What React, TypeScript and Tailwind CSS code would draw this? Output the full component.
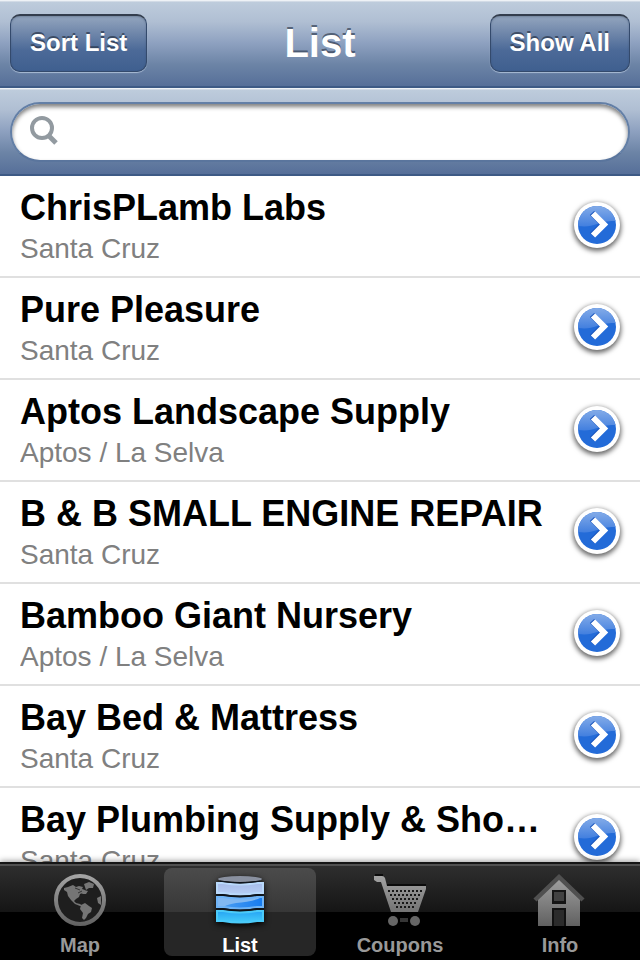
import React from "react";

type Tab = "map" | "list" | "coupons" | "info";

const places = [
  { name: "ChrisPLamb Labs", area: "Santa Cruz" },
  { name: "Pure Pleasure", area: "Santa Cruz" },
  { name: "Aptos Landscape Supply", area: "Aptos / La Selva" },
  { name: "B & B SMALL ENGINE REPAIR", area: "Santa Cruz" },
  { name: "Bamboo Giant Nursery", area: "Aptos / La Selva" },
  { name: "Bay Bed & Mattress", area: "Santa Cruz" },
  { name: "Bay Plumbing Supply & Showroom", area: "Santa Cruz" },
];

const barFill =
  "border-b-2 border-[#3d5a85] bg-[linear-gradient(180deg,#bfcddd_0%,#b0bfd3_25%,#8ea1c0_50%,#6c84a6_75%,#566f99_100%)] shadow-[inset_0_1px_0_#eef2f6,inset_0_2px_0_#d2dbe6]";

function BarButton({ children }: { children: React.ReactNode }) {
  return (
    <button
      type="button"
      className="h-[58px] rounded-[10px] border border-t-2 border-[#344a6c] border-t-[#333d4d] bg-[linear-gradient(180deg,#93a5be_0%,#7188ab_30%,#4c6a98_62%,#3f5f8f_100%)] px-[19px] pb-[2px] text-2xl leading-7 font-bold text-white shadow-[inset_0_1px_2px_rgba(40,55,80,0.3),0_1px_1px_rgba(200,215,235,0.7)] [text-shadow:0_-2px_0_rgba(40,52,72,0.7)]"
    >
      {children}
    </button>
  );
}

function DisclosureButton({ label }: { label: string }) {
  return (
    <button
      type="button"
      aria-label={label}
      className="mt-[14px] flex size-[46px] shrink-0 items-center justify-center rounded-full bg-white shadow-[0_2px_5px_1px_rgba(0,0,0,0.6)]"
    >
      <svg viewBox="0 0 38 38" className="size-[38px]" aria-hidden="true">
        <defs>
          <linearGradient id="gloss" x1="0" y1="0" x2="0" y2="1">
            <stop offset="0" stopColor="#83abe8" />
            <stop offset="1" stopColor="#427fdf" />
          </linearGradient>
          <clipPath id="disc">
            <circle cx="19" cy="19" r="19" />
          </clipPath>
        </defs>
        <g clipPath="url(#disc)">
          <rect width="38" height="38" fill="#236bd8" />
          <path d="M0 20C9 21 13 20 19 18C26 15.500 32 15 38 15V0H0Z" fill="url(#gloss)" />
        </g>
        <path d="M14 7L25 18L14 29" fill="none" stroke="#1b56bd" strokeWidth="6" />
        <path d="M15 7.500L26 18.500L15 29.500" fill="none" stroke="#fff" strokeWidth="6" />
      </svg>
    </button>
  );
}

function GrayGradient({ id }: { id: string }) {
  return (
    <linearGradient id={id} gradientUnits="userSpaceOnUse" x1="0" y1="0" x2="0" y2="58">
      <stop offset="0" stopColor="#ababab" />
      <stop offset="1" stopColor="#5e5e5e" />
    </linearGradient>
  );
}

function GlobeIcon() {
  return (
    <svg viewBox="0 0 60 60" className="size-[60px]" aria-hidden="true">
      <defs><GrayGradient id="globeGray" /></defs>
      <circle cx="30" cy="30" r="24" fill="#1e1e1e" stroke="url(#globeGray)" strokeWidth="4" />
      <g fill="#757575">
        <path d="M14 18L18 17L23 15L26 17L29 16L33 17L32 19L35 20L33 23L30 24L29 27L26 29L24 31L26 33L30 34L33 36L30 36L25 34L21 30L18 26L17 22L14 20Z" />
        <path d="M34 14L39 12L44 14L43 18L39 18L36 20L35 17Z" />
        <path d="M31 35L35 33L39 36L42 38L41 42L38 44L36 48L34 50L32 48L33 43L30 39Z" />
        <path d="M47 28L51 26V35L48 33Z" />
        <path d="M34 20L38 21L36 24L32 24Z" />
      </g>
      <path d="M25 18L30 20M28 23L32 21" stroke="#333" strokeWidth="1" />
    </svg>
  );
}

function DatabaseIcon() {
  return (
    <svg viewBox="0 0 60 60" className="size-[60px] drop-shadow-[0_2px_3px_#000000]" aria-hidden="true">
      <defs>
        <linearGradient id="layerTop" x1="0" y1="0" x2="0" y2="1">
          <stop offset="0" stopColor="#a7bce9" />
          <stop offset="1" stopColor="#b6cef5" />
        </linearGradient>
        <linearGradient id="layerLow" x1="0" y1="0" x2="0" y2="1">
          <stop offset="0" stopColor="#26a4f4" />
          <stop offset="1" stopColor="#46cdfa" />
        </linearGradient>
        <linearGradient id="layerGloss" x1="0" y1="0" x2="1" y2="0">
          <stop offset="0" stopColor="#4a9df2" />
          <stop offset="1" stopColor="#177cf0" />
        </linearGradient>
      </defs>
      <ellipse cx="30" cy="9" rx="22" ry="3" fill="#89909f" />
      <path d="M7 13L13 13Q30 16 47 13L53 13V23L47 23Q30 26 13 23L7 23Z" fill="url(#layerTop)" stroke="#b9d9fb" strokeWidth="2" />
      <path d="M7 27L13 27Q30 30 47 27L53 27V37L47 37Q30 40 13 37L7 37Z" fill="#81b8f2" />
      <path d="M13 37C22 31 40 34 52 27V37L47 37Q30 40 13 37Z" fill="url(#layerGloss)" />
      <path d="M7 27L13 27Q30 30 47 27L53 27V37L47 37Q30 40 13 37L7 37Z" fill="none" stroke="#6fb4f7" strokeWidth="2" />
      <path d="M7 41L13 41Q30 44 47 41L53 41V51L47 51Q30 54 13 51L7 51Z" fill="url(#layerLow)" stroke="#4bcaf9" strokeWidth="2" />
      <g fill="#101820">
        <path d="M10 10.500Q30 14 50 10.500V11.800Q30 15 10 11.800Z" />
        <path d="M6 24.300H14Q30 27 46 24.300H54V25.700H46Q30 28.300 14 25.700H6Z" />
        <path d="M6 38.300H14Q30 41 46 38.300H54V39.700H46Q30 42.300 14 39.700H6Z" />
      </g>
    </svg>
  );
}

const cartHoles = [
  { y: 20, x: 18, count: 9 },
  { y: 24, x: 20, count: 8 },
  { y: 28, x: 22, count: 7 },
  { y: 32, x: 24, count: 6 },
  { y: 36, x: 26, count: 5 },
];

function CartIcon() {
  return (
    <svg viewBox="0 0 60 60" className="size-[60px]" aria-hidden="true">
      <defs><GrayGradient id="cartGray" /></defs>
      <path d="M4 6H12Q14 6 15 8L17 16H56V19L48 42H21L11 12H7L4 10Z" fill="url(#cartGray)" />
      <path d="M5 5H13M17 15H56" stroke="#0b0b0b" strokeWidth="2" />
      <g fill="#171717">
        {cartHoles.flatMap((row) =>
          Array.from({ length: row.count }, (_, i) => (
            <rect key={`${row.y}-${i}`} x={row.x + i * 4} y={row.y} width="2" height="2" />
          )),
        )}
      </g>
      <rect x="30" y="48" width="8" height="4" fill="#353535" />
      <circle cx="23" cy="51" r="5" fill="#666" />
      <circle cx="45" cy="51" r="5" fill="#666" />
    </svg>
  );
}

function HouseIcon() {
  return (
    <svg viewBox="0 0 60 60" className="size-[60px]" aria-hidden="true">
      <defs><GrayGradient id="houseGray" /></defs>
      <path d="M8 29L29 9L50 29V56H8Z" fill="url(#houseGray)" />
      <path d="M5 30L29 7L53 30" fill="none" stroke="#505050" strokeWidth="4.500" />
      <rect x="22" y="20" width="14" height="14" fill="#151515" />
      <rect x="24" y="22" width="10" height="9" fill="#414141" />
      <path d="M22 56V38H36V56Z" fill="#111" />
      <rect x="24" y="40" width="10" height="16" fill="#2b2b2b" />
    </svg>
  );
}

const tabs: { id: Tab; label: string; icon: React.ReactNode }[] = [
  { id: "map", label: "Map", icon: <GlobeIcon /> },
  { id: "list", label: "List", icon: <DatabaseIcon /> },
  { id: "coupons", label: "Coupons", icon: <CartIcon /> },
  { id: "info", label: "Info", icon: <HouseIcon /> },
];

export default function App() {
  const [active, setActive] = React.useState<Tab>("list");

  return (
    <div className="flex h-screen flex-col overflow-hidden bg-white font-['Liberation_Sans',Arial,sans-serif]">
      <header className={`grid h-[88px] shrink-0 grid-cols-[1fr_auto_1fr] items-center px-[10px] ${barFill}`}>
        <div><BarButton>Sort List</BarButton></div>
        <h1 className="text-[40px] leading-[44px] font-bold text-white [text-shadow:0_-2px_0_rgba(50,62,82,0.7)]">List</h1>
        <div className="text-right"><BarButton>Show All</BarButton></div>
      </header>

      <form role="search" className={`h-[88px] shrink-0 px-[10px] pt-[14px] ${barFill}`} onSubmit={(e) => e.preventDefault()}>
        <label className="flex h-[60px] items-center gap-2 rounded-full border-2 border-[#637fa6] border-b-[#5a759d] bg-white px-4 shadow-[inset_0_3px_4px_rgba(0,0,0,0.5)]">
          <svg viewBox="0 0 32 32" className="size-8 shrink-0" fill="none" stroke="#929aa0" strokeWidth="4" aria-hidden="true">
            <circle cx="14" cy="12" r="10" />
            <path d="M20 19L28 27" strokeWidth="5" />
          </svg>
          <input type="search" aria-label="Search" className="h-10 min-w-0 flex-1 bg-transparent text-[28px] text-black outline-none" />
        </label>
      </form>

      <main className="min-h-0 flex-1 overflow-hidden">
        <ul>
          {places.map((place) => (
            <li key={place.name} className="flex h-[102px] items-start gap-3 border-b-2 border-[#e0e0e0] px-5 pt-3">
              <div className="min-w-0 flex-1">
                <h2 className="truncate text-[36px] leading-10 font-bold text-black">{place.name}</h2>
                <p className="mt-[5px] truncate text-[28px] leading-8 text-[#808080]">{place.area}</p>
              </div>
              <DisclosureButton label={`Details for ${place.name}`} />
            </li>
          ))}
        </ul>
      </main>

      <nav className="z-10 flex h-[98px] shrink-0 border-t-2 border-[#151515] bg-[linear-gradient(180deg,#505050_0px,#505050_2px,#2e2e2e_2px,#151515_48px,#000000_48px)] pt-1 pb-1 shadow-[0_-1px_6px_rgba(0,0,0,0.4)]">
        {tabs.map((tab) => (
          <button
            key={tab.id}
            type="button"
            aria-current={active === tab.id ? "page" : undefined}
            onClick={() => setActive(tab.id)}
            className={`mx-1 flex flex-1 flex-col items-center gap-1 rounded-lg pt-[2px] text-xl leading-[22px] font-bold ${
              active === tab.id
                ? "bg-[linear-gradient(180deg,#4b4b4b_0px,#373737_44px,#262626_44px)] text-white"
                : "text-[#999999]"
            }`}
          >
            {tab.icon}
            <span>{tab.label}</span>
          </button>
        ))}
      </nav>
    </div>
  );
}
